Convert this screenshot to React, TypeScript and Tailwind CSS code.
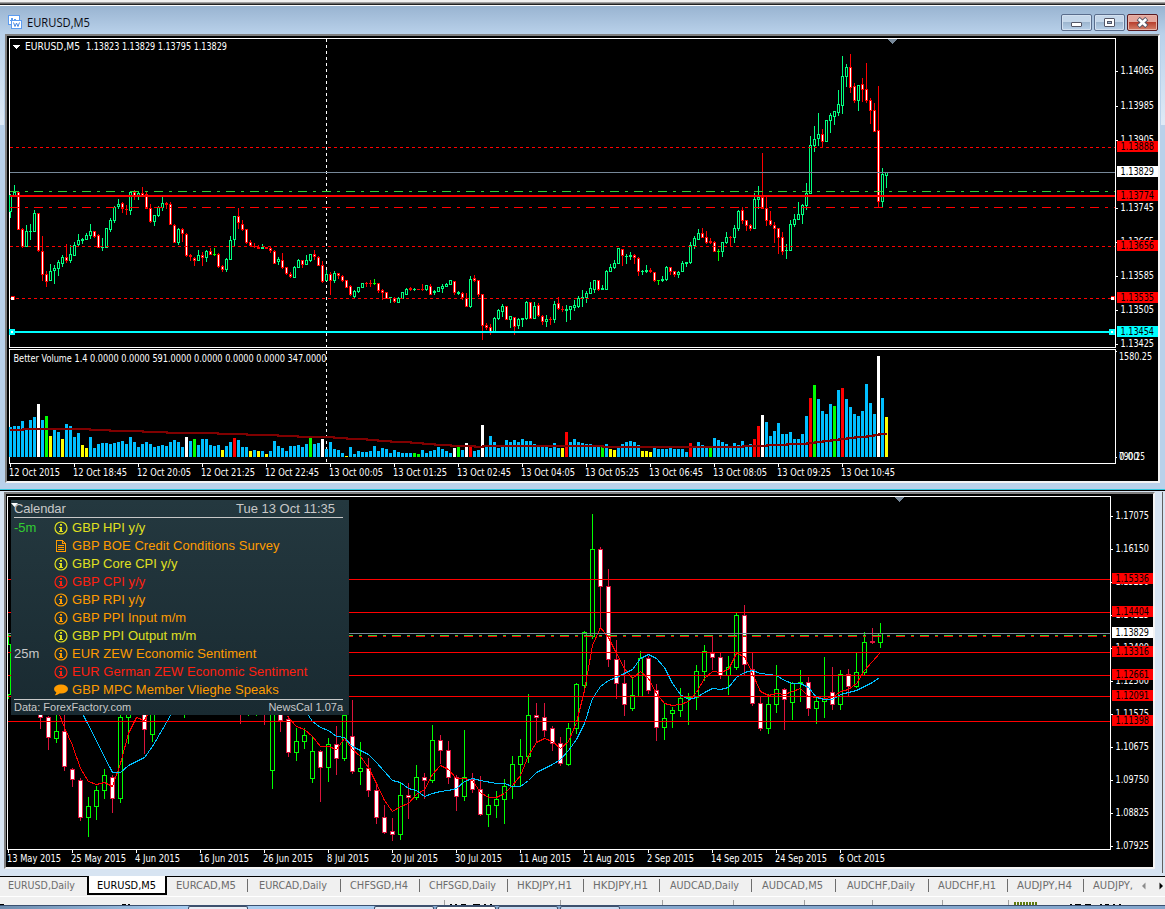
import { ReactNode } from 'react';

// dir, high, open/close top, open/close bottom, low
// u = bullish, d = bearish, l = doji
const M5_CANDLES = `
u194,195,211,218 u185,192,195,197 d192,192,229,229 d228,229,246,248 u225,231,246,246 u224,231,231,240 u210,213,231,231 d213,213,250,252 d236,251,274,281 d271,274,281,287
u264,271,280,280 u265,268,270,284 u260,262,268,276 u255,257,263,267 d244,257,260,263 u245,254,260,263 u242,245,255,255 u234,240,244,246 u238,239,240,244 u233,235,239,239
u224,231,235,239 d231,231,236,238 d234,235,247,247 u238,247,247,251 u228,228,247,247 u218,220,229,232 u206,207,220,223 u199,204,206,209 d202,203,208,213 d205,209,209,215
u191,192,210,215 d190,192,195,200 u191,193,195,200 d187,193,195,195 d192,194,208,209 d204,208,221,223 u215,215,221,226 u206,207,215,217 u197,203,207,211 d202,203,204,209
d202,204,224,224 d224,225,242,242 u228,229,242,245 d228,229,233,242 d233,234,255,257 d254,255,256,261 d257,258,260,266 u250,255,260,261 d252,255,257,266 u250,251,257,262
d248,251,254,255 l248,254,254,256 d253,254,266,268 d265,266,269,272 u258,259,269,272 u236,240,259,259 u216,216,239,246 d208,216,222,229 d220,224,229,231 d229,229,242,244
d240,242,245,246 d243,246,246,248 d245,247,248,249 u244,247,248,248 d247,247,248,248 d246,248,250,253 d250,251,263,264 u257,259,261,265 d253,260,267,269 d267,267,273,275
d272,274,276,278 u266,267,277,278 u259,260,267,268 d260,260,264,268 u255,260,264,265 u254,254,260,262 d250,254,256,260 d256,257,265,266 d261,265,281,283 u270,274,280,281
d272,274,280,295 u271,273,280,283 d273,273,275,279 d275,276,280,282 d280,280,287,288 d285,286,294,296 u290,291,296,298 u287,287,291,293 u283,283,287,288 d282,283,283,287
d280,283,283,287 l279,283,283,285 d283,283,290,293 d289,290,292,300 d292,292,298,299 u297,297,297,303 d297,298,301,303 u297,298,302,302 u292,292,298,298 u288,289,294,295
d287,288,289,291 u288,289,289,291 d289,289,289,290 d284,289,289,291 u285,285,289,291 d284,286,294,295 u290,291,292,295 u287,287,291,291 u284,286,288,293 u283,284,286,287
u280,280,284,285 d281,281,292,295 u291,292,293,295 d292,293,297,300 d293,298,306,307 u276,279,306,308 d275,278,280,282 d280,280,294,297 d294,294,325,340 d323,325,327,330
d324,327,331,335 u317,318,331,332 u309,310,318,320 u304,306,311,317 d306,306,319,320 u316,316,319,328 d317,317,326,335 u318,319,325,329 u318,318,319,327 u301,302,318,320
d302,302,318,319 u302,306,318,319 d303,305,315,317 d315,316,321,325 u315,319,321,327 d317,319,319,325 u301,304,319,323 d297,303,308,310 d306,309,309,312 u305,309,310,322
u306,306,309,320 u300,305,307,311 u296,298,306,308 u290,297,298,307 u291,293,297,303 u282,288,293,294 u280,280,289,293 d280,280,289,291 u285,288,289,290 u270,271,289,290
u264,267,271,272 u260,263,267,269 u248,248,263,263 d249,249,255,266 u254,256,256,264 u252,255,256,260 d254,255,257,264 d257,258,271,276 u270,271,271,275 u265,270,271,273
d268,270,271,273 d272,272,280,282 l280,280,280,285 u276,279,280,282 u266,267,279,281 d267,267,271,275 d271,271,274,277 u271,272,274,278 u261,263,271,272 u262,262,263,267
u242,245,262,264 u236,238,245,249 u229,233,239,240 d228,233,237,238 d231,237,242,244 d238,241,242,244 d241,242,251,252 l249,251,251,261 u242,242,251,257 u232,237,242,244
d236,237,237,247 u225,228,237,243 u210,211,228,231 d207,210,220,224 d220,220,225,231 d224,225,228,231 u193,199,228,229 u186,197,199,209 d153,197,208,209 d197,208,220,226
d211,220,224,226 d222,225,228,243 d228,228,237,254 d232,237,251,255 u244,250,250,259 u220,224,250,250 u214,219,224,227 u202,214,219,220 u204,205,214,224 u183,193,205,210
u136,145,193,194 u126,139,145,152 u113,134,138,146 d129,134,141,147 u120,120,141,142 u113,115,120,133 u111,111,116,125 u90,104,112,116 u56,76,105,114 u64,67,76,87
d54,67,87,93 d83,86,100,103 u85,85,100,111 d78,84,89,102 d63,89,100,103 d98,100,110,124 d103,110,131,132 d86,130,201,207 u168,174,201,207 u172,172,175,188`;

const DAILY_CANDLES = `
u633,644,694,699 u600,620,650,670 u600,620,650,670 u600,620,650,670 d700,705,717,729 d716,717,737,750 u705,731,738,743 d700,731,766,771 d768,769,779,787 d778,780,817,821
u797,806,817,837 u786,790,806,820 u769,775,790,799 d775,777,798,813 u705,717,798,803 u700,705,717,744 u600,620,650,670 d700,705,729,754 u700,705,734,742 u600,620,650,670
u600,620,650,670 u600,620,650,670 u600,620,650,718 u600,620,650,670 u600,620,650,670 u600,620,650,670 u600,620,650,670 u600,620,650,670 u600,620,650,670 d600,620,650,724
u600,620,650,716 u600,620,650,716 d600,620,650,725 u705,705,770,789 d700,705,720,732 d716,719,752,757 u728,741,752,761 u728,735,741,749 u737,751,778,783 d750,751,767,802
u738,744,767,782 d726,744,758,775 u715,715,758,761 d700,736,771,774 u742,768,771,785 d758,768,790,797 d784,790,817,824 d805,817,832,834 d818,831,834,841 u783,795,834,840
d783,795,797,819 u765,777,797,800 d773,777,780,799 u725,740,780,783 d735,740,750,764 d741,750,777,784 d775,777,796,811 u730,777,796,801 d773,779,789,793 d776,789,814,816
u794,805,814,827 u791,799,805,818 u779,786,799,824 u756,764,786,799 u739,756,764,786 u694,715,756,763 d703,715,717,742 d703,717,730,737 d726,728,743,751 d737,743,763,766
u723,728,764,766 u683,684,728,734 u631,632,685,689 u514,549,636,639 d547,549,586,627 d569,586,659,667 d640,659,683,699 d660,683,704,716 u677,695,708,711 u651,658,696,696
d656,658,690,694 d684,690,727,741 u703,718,727,740 u707,710,713,728 u688,698,710,717 u693,697,698,725 u665,671,697,710 u645,651,671,681 d636,653,657,670 d653,657,675,679
u656,667,675,695 u613,615,667,670 d605,615,664,675 d653,669,703,706 d697,703,728,731 u694,704,728,734 u665,689,704,713 d688,689,699,730 u682,683,702,720 u670,682,683,702
d677,682,708,716 u697,701,708,724 u657,699,701,718 d667,692,704,710 u670,674,704,710 d669,674,686,696 u653,672,686,688 u632,642,672,675 d628,641,642,644 u623,633,642,648`;

// bar height, suffix is the colour when it is not a normal bar
const VOLUMES = `
30 31 31 36 28 37 40 53w 37 41g 21y 27 25 18y 33 31 20 24 12y 9y 20 9 13 14 14 13 14 15 16 13 20 15 10 13 15 13 10 11 12 11
15 17 15 10 20w 16 18g 12 18 18 12 11 12 7y 11 15 19r 17 10 10 6y 7 6y 6 3y 6 16 11 9 6 11 11 12 10 13 19g 13 14 18w 8
15 8 7 4 1y 10 3 6 5 5 6 11 6 9 8 4 7 5 4 4 4 4g 3g 7 4 6 7 10 8 6 4 9w 10g 7 14w 11r 6 7 32w 11
21 15 9 11 17 15 17 15 18 16 16 13 11 11 10 9 14 9 9y 25r 15 18 15 14 13 13 11 11 10g 13 8y 7y 10 13 15 16 15 12 6y 6y
5y 9 8 8 8 9 8 8 8 5 14r 10 15 12 10 10g 19 17 15 13 11 14 12 16 10 13 18r 31r 42w 35 21 26 34 23 23 25 18 18 23 41
59r 72g 58 46 43 53 51g 67 69r 58 50 43 41 46 73 54 43 101w 59 40y`;

const VOLUME_COLORS: Record<string, string> = {
  w: '#ffffff',
  g: '#00ff00',
  y: '#ffff00',
  r: '#ff0000',
};

const VOLUME_MA =
  'M10 430H23V429H90V430H110V431H143V432H167V433H218V434H247V435H278V436H298V437H334V438H347V439H367V440H378V441H391V442H411V443H423V444H435V445H451V446H475V447H483V446H603V447H743V446H767V445H787V444H807V443H815V442H823V441H831V440H839V439H847V438H855V437H867V436H874V435H879V434H887';

const FAST_MA = [
  '59,714 64,727 72,745 80,768 88,781 96,784 104,782 112,786 120,763 128,733 136,717 144,720 148,712',
  '287,716 296,726 304,729 312,736 320,746 328,746 336,749 344,738 352,749 360,756 368,767 376,783 384,800 392,811 400,806 408,803 416,794 424,789 432,774 440,765 448,769 456,778 464,778 472,780 480,792 488,797 496,797 504,793 512,785 520,775 528,755 536,742 544,738 552,741 560,748 568,741 576,722 584,690 592,645 600,627 608,637 616,653 624,668 632,678 640,671 648,678 656,693 664,703 672,705 680,704 688,701 696,692 704,678 712,671 720,672 728,669 736,653 744,656 752,673 760,691 768,695 776,693 784,694 792,691 800,688 808,696 816,697 824,698 832,697 840,691 848,689 856,683 864,670 872,661 879,653',
];

const SLOW_MA = [
  '83,715 112,772 120,772 128,765 144,757 152,746 170,715',
  '308,715 312,721 320,727 328,730 336,736 344,737 352,746 360,750 368,754 376,762 384,771 392,780 400,782 408,788 416,790 424,796 432,793 440,791 448,790 456,788 464,781 472,778 480,780 496,783 504,783 512,786 520,786 528,780 536,772 552,764 560,759 568,750 576,739 584,723 592,698 600,686 608,680 616,677 624,673 632,669 640,658 648,654 656,658 664,667 672,683 680,694 688,699 696,697 704,692 712,688 720,689 728,687 736,677 744,672 752,670 760,673 768,674 776,675 784,680 792,683 800,683 808,687 816,697 824,699 832,699 840,694 848,692 856,690 864,686 872,682 879,677',
];

const M5_TIMES = [
  '12 Oct 2015', '12 Oct 18:45', '12 Oct 20:05', '12 Oct 21:25', '12 Oct 22:45', '13 Oct 00:05', '13 Oct 01:25',
  '13 Oct 02:45', '13 Oct 04:05', '13 Oct 05:25', '13 Oct 06:45', '13 Oct 08:05', '13 Oct 09:25', '13 Oct 10:45',
];

const DAILY_TIMES: [string, number][] = [
  ['13 May 2015', 54], ['25 May 2015', 55], ['4 Jun 2015', 45], ['16 Jun 2015', 50], ['26 Jun 2015', 50],
  ['8 Jul 2015', 42], ['20 Jul 2015', 47], ['30 Jul 2015', 47], ['11 Aug 2015', 52], ['21 Aug 2015', 52],
  ['2 Sep 2015', 47], ['14 Sep 2015', 52], ['24 Sep 2015', 52], ['6 Oct 2015', 46],
];

const M5_PRICES: [string, number][] = [
  ['1.14065', 71], ['1.13985', 106], ['1.13905', 140], ['1.13745', 208], ['1.13665', 242],
  ['1.13585', 276], ['1.13505', 310], ['1.13425', 344],
];

const DAILY_PRICES: [string, number][] = [
  ['1.17075', 516], ['1.16150', 549], ['1.15250', 582], ['1.14325', 615], ['1.13400', 648], ['1.12500', 681],
  ['1.11575', 714], ['1.10675', 747], ['1.09750', 780], ['1.08825', 813], ['1.07925', 846],
];

const M5_TAGS: [string, number, string][] = [
  ['1.13888', 141, '#ff0000'],
  ['1.13829', 166, '#ffffff'],
  ['1.13774', 190, '#ff0000'],
  ['1.13656', 240, '#ff0000'],
  ['1.13535', 292, '#ff0000'],
  ['1.13454', 326, '#00ffff'],
];

const DAILY_TAGS: [string, number, string][] = [
  ['1.15336', 573, '#ff0000'],
  ['1.14404', 606, '#ff0000'],
  ['1.13829', 627, '#ffffff'],
  ['1.13316', 646, '#ff0000'],
  ['1.12661', 669, '#ff0000'],
  ['1.12091', 690, '#ff0000'],
  ['1.11398', 715, '#ff0000'],
];

const TABS = [
  { label: 'EURCAD,M5', w: 'w-[81px]', text: 60 },
  { label: 'EURCAD,Daily', w: 'w-[93px]', text: 68 },
  { label: 'CHFSGD,H4', w: 'w-[79px]', text: 58 },
  { label: 'CHFSGD,Daily', w: 'w-[88px]', text: 67 },
  { label: 'HKDJPY,H1', w: 'w-[76px]', text: 55 },
  { label: 'HKDJPY,H1', w: 'w-[76px]', text: 55 },
  { label: 'AUDCAD,Daily', w: 'w-[92px]', text: 69 },
  { label: 'AUDCAD,M5', w: 'w-[84px]', text: 61 },
  { label: 'AUDCHF,Daily', w: 'w-[93px]', text: 68 },
  { label: 'AUDCHF,H1', w: 'w-[79px]', text: 58 },
  { label: 'AUDJPY,H4', w: 'w-[76px]', text: 55 },
];

const EVENTS = [
  { time: '-5m', icon: 'info', text: 'GBP HPI y/y', color: 'text-[#e0e020]' },
  { time: '', icon: 'doc', text: 'GBP BOE Credit Conditions Survey', color: 'text-[#ff9c00]' },
  { time: '', icon: 'info', text: 'GBP Core CPI y/y', color: 'text-[#e0e020]' },
  { time: '', icon: 'info', text: 'GBP CPI y/y', color: 'text-[#ff2010]' },
  { time: '', icon: 'info', text: 'GBP RPI y/y', color: 'text-[#ff9c00]' },
  { time: '', icon: 'info', text: 'GBP PPI Input m/m', color: 'text-[#ff9c00]' },
  { time: '', icon: 'info', text: 'GBP PPI Output m/m', color: 'text-[#e0e020]' },
  { time: '25m', icon: 'info', text: 'EUR ZEW Economic Sentiment', color: 'text-[#ff9c00]' },
  { time: '', icon: 'info', text: 'EUR German ZEW Economic Sentiment', color: 'text-[#ff2010]' },
  { time: '', icon: 'speech', text: 'GBP MPC Member Vlieghe Speaks', color: 'text-[#ff9c00]' },
];

const DASH_DOT = '9 6 3 6';

const Candles = ({ data, x0, step, half, up, down }: { data: string; x0: number; step: number; half: number; up: string; down: string }) => (
  <g>
    {data.trim().split(/\s+/).map((item, i) => {
      const dir = item[0];
      const [high, top, bottom, low] = item.slice(1).split(',').map(Number);
      const x = x0 + i * step;
      const color = dir === 'u' ? up : dir === 'd' ? down : '#00ff00';
      return (
        <g key={i}>
          <rect x={x} y={high} width={1} height={Math.max(low - high, 1)} fill={color} />
          <rect x={x - half} y={top} width={half * 2 + 1} height={bottom - top + 1} fill={color} />
          {bottom - top > 1 && (
            <rect x={x - half + 1} y={top + 1} width={half * 2 - 1} height={bottom - top - 1} fill={dir === 'u' ? '#000' : '#fff'} />
          )}
        </g>
      );
    })}
  </g>
);

const Label = ({ x, y, w, fill = '#fff', children }: { x: number; y: number; w: number; fill?: string; children: ReactNode }) => (
  <text x={x} y={y} textLength={w} lengthAdjust="spacingAndGlyphs" fill={fill} fontSize="10">
    {children}
  </text>
);

const HLine = ({ x1, x2, y, color, dash, width = 1 }: { x1: number; x2: number; y: number; color: string; dash?: string; width?: number }) => (
  <line x1={x1} x2={x2} y1={y + width / 2} y2={y + width / 2} stroke={color} strokeWidth={width} strokeDasharray={dash} />
);

const PriceScale = ({ x, prices, tags }: { x: number; prices: [string, number][]; tags: [string, number, string][] }) => (
  <g>
    {prices.map(([text, y]) => (
      <g key={text}>
        <rect x={x} y={y} width={3} height={1} fill="#fff" />
        <Label x={x + 5.5} y={y + 3} w={33.5}>{text}</Label>
      </g>
    ))}
    {tags.map(([text, y, color]) => (
      <g key={text}>
        <rect x={x + 2} y={y} width={41} height={11} fill={color} />
        <Label x={x + 5.5} y={y + 9} w={33.5} fill="#000">{text}</Label>
      </g>
    ))}
  </g>
);

const M5Chart = () => (
  <svg width="1151" height="445" viewBox="7 36 1151 445" shapeRendering="crispEdges" className="block shrink-0 bg-black font-['DejaVu_Sans_Condensed','DejaVu_Sans',sans-serif]">
    <rect x="9.5" y="38.5" width="1106" height="309" fill="none" stroke="#fff" />
    <rect x="9.5" y="349.5" width="1106" height="114" fill="none" stroke="#fff" />
    <line x1="326.5" x2="326.5" y1="39" y2="462" stroke="#fff" strokeDasharray="3 3" />

    <Candles data={M5_CANDLES} x0={10} step={4} half={1} up="#00ff7f" down="#ff0000" />

    {/* Levels */}
    <HLine x1={10} x2={1115} y={147} color="#ff0000" dash="3 3" />
    <HLine x1={10} x2={1115} y={172} color="#778899" />
    <HLine x1={10} x2={1115} y={191} color="#32cd32" dash={DASH_DOT} />
    <HLine x1={10} x2={1115} y={195} color="#ff0000" width={2} />
    <HLine x1={10} x2={1115} y={207} color="#ff0000" dash={DASH_DOT} />
    <HLine x1={10} x2={1115} y={246} color="#ff0000" dash="3 3" />
    <HLine x1={10} x2={1115} y={298} color="#ff0000" dash="3 3" />
    <HLine x1={10} x2={1115} y={331} color="#00ffff" width={2} />
    <rect x="11" y="296" width="4" height="4" fill="#ff0000" />
    <rect x="11" y="297" width="3" height="3" fill="#fff" />
    <rect x="1111" y="296" width="4" height="4" fill="#ff0000" />
    <rect x="1111" y="297" width="3" height="3" fill="#fff" />
    <rect x="9" y="329" width="6" height="6" fill="#00ffff" />
    <rect x="11" y="331" width="2" height="2" fill="#fff" />
    <rect x="1109" y="329" width="6" height="6" fill="#00ffff" />
    <rect x="1111" y="331" width="2" height="2" fill="#fff" />

    <path d="M13 45h7l-3.5 4z" fill="#fff" />
    <path d="M888 39h9l-4.5 5z" fill="#778899" />
    <Label x={25} y={50} w={55}>EURUSD,M5</Label>
    <Label x={86} y={50} w={141}>1.13823 1.13829 1.13795 1.13829</Label>
    <PriceScale x={1115} prices={M5_PRICES} tags={M5_TAGS} />

    {/* Volume */}
    {VOLUMES.trim().split(/\s+/).map((v, i) => {
      const h = parseInt(v, 10);
      return <rect key={i} x={9 + i * 4} y={457 - h} width={3} height={h} fill={VOLUME_COLORS[v.slice(-1)] ?? '#00bfff'} />;
    })}
    <path d={VOLUME_MA} fill="none" stroke="#800000" strokeWidth="2" />
    <Label x={13.5} y={362} w={313}>Better Volume 1.4 0.0000 0.0000 591.0000 0.0000 0.0000 0.0000 347.0000</Label>
    <rect x="1115" y="351" width="2" height="1" fill="#fff" />
    <rect x="1115" y="457" width="2" height="1" fill="#fff" />
    <Label x={1119} y={360} w={33}>1580.25</Label>
    <Label x={1119} y={460} w={20}>0.00</Label>
    <Label x={1119} y={460} w={26}>790.25</Label>

    {M5_TIMES.map((t, i) => (
      <g key={t}>
        <rect x={10 + i * 64} y={463} width={1} height={4} fill="#fff" />
        <Label x={9 + i * 64} y={476} w={i === 0 ? 51 : 54}>{t}</Label>
      </g>
    ))}
  </svg>
);

const DailyChart = () => (
  <svg width="1147" height="373" viewBox="6 494 1147 373" shapeRendering="crispEdges" className="block bg-black font-['DejaVu_Sans_Condensed','DejaVu_Sans',sans-serif]">
    <clipPath id="daily-plot">
      <rect x="8" y="497" width="1102" height="352" />
    </clipPath>
    <g clipPath="url(#daily-plot)">
      <Candles data={DAILY_CANDLES} x0={8} step={8} half={2} up="#00ff00" down="#dc143c" />
      {FAST_MA.map((p) => (
        <polyline key={p} points={p} fill="none" stroke="#ff0000" transform="translate(.5 .5)" />
      ))}
      {SLOW_MA.map((p) => (
        <polyline key={p} points={p} fill="none" stroke="#00bfff" transform="translate(.5 .5)" />
      ))}
    </g>
    <rect x="7.5" y="496.5" width="1103" height="353" fill="none" stroke="#fff" />

    {[579, 612, 652, 675, 696, 721].map((y) => (
      <HLine key={y} x1={8} x2={1110} y={y} color="#ff0000" />
    ))}
    <HLine x1={8} x2={1110} y={633} color="#778899" />
    <HLine x1={8} x2={1110} y={635} color="#ff0000" dash={DASH_DOT} width={2} />
    <HLine x1={8} x2={1110} y={635} color="#32cd32" dash={DASH_DOT} />

    <path d="M895 497h9l-4.5 5z" fill="#778899" />
    <PriceScale x={1110} prices={DAILY_PRICES} tags={DAILY_TAGS} />
    {DAILY_TIMES.map(([t, w], i) => (
      <g key={t}>
        <rect x={8 + i * 64} y={849} width={1} height={4} fill="#fff" />
        <Label x={7 + i * 64} y={862} w={w}>{t}</Label>
      </g>
    ))}
  </svg>
);

const EventIcon = ({ type }: { type: string }) => {
  if (type === 'doc') {
    return (
      <svg width="14" height="14" viewBox="0 0 14 14" fill="none" stroke="currentColor" shapeRendering="crispEdges">
        <path d="M2.5 1.5h6l3 3v8h-9zM8.5 1.5v3h3M4 6.5h6M4 8.5h6M4 10.5h6" />
      </svg>
    );
  }
  if (type === 'speech') {
    return (
      <svg width="14" height="14" viewBox="0 0 14 14" fill="currentColor">
        <ellipse cx="7" cy="6" rx="7" ry="4.5" />
        <path d="M2.5 8.5C2.4 10 1.8 11 .8 12.2c2.5-.2 4-1 5.2-2.5z" />
      </svg>
    );
  }
  return (
    <svg width="14" height="14" viewBox="0 0 14 14" fill="none" stroke="currentColor">
      <circle cx="7" cy="7" r="6" strokeWidth="1.2" />
      <path d="M7 3v1.8M7 6v5" strokeWidth="2" />
      <path d="M5 6.5h2M5 10.5h4" />
    </svg>
  );
};

const Calendar = () => (
  <div className="absolute left-[5px] top-[6px] flex h-[215px] w-[338px] flex-col bg-linear-to-b from-[#24383f] to-[#192a31] pl-[3px] pr-[6px] font-['Liberation_Sans',Arial,sans-serif] text-[13px] text-[#c8c8c8]">
    <svg width="7" height="4" viewBox="0 0 7 4" className="absolute left-0 top-[3px]">
      <path d="M0 0h7l-3.5 4z" fill="#fff" />
    </svg>
    <div className="flex h-[18px] items-center justify-between border-b border-[#c8c8c8] pr-2 leading-[18px]">
      <span className="-tracking-[0.15px] pt-px">Calendar</span>
      <span className="pt-px">Tue 13 Oct 11:35</span>
    </div>
    <div className="flex flex-col pt-px">
      {EVENTS.map((e) => (
        <div key={e.text} className="flex h-[18px] items-center leading-[18px]">
          <span className={e.time === '-5m' ? 'w-[40px] text-[#32cd32]' : 'w-[40px]'}>{e.time}</span>
          <span className={`flex items-center gap-1 whitespace-nowrap tracking-[0.06px] ${e.color}`}>
            <EventIcon type={e.icon} />
            {e.text}
          </span>
        </div>
      ))}
    </div>
    <div className="flex h-[16px] items-center justify-between border-t border-[#c8c8c8] text-[11px] leading-[15px]">
      <span>Data: ForexFactory.com</span>
      <span>NewsCal 1.07a</span>
    </div>
  </div>
);

const TabText = ({ children, w, fill = '#6d6d6d' }: { children: string; w: number; fill?: string }) => (
  <svg width={w + 2} height="15" className="-mt-px shrink-0 overflow-visible">
    <text x="0" y="11" textLength={w} lengthAdjust="spacingAndGlyphs" fontSize="11" fill={fill}>
      {children}
    </text>
  </svg>
);

const TitleBar = () => (
  <div className="flex h-[28px] shrink-0 items-start justify-between bg-linear-to-b from-[#99b4d1] to-[#b9d1ea] pl-2 pr-[7px] pt-2">
    <div className="flex items-start gap-[5px]">
      <svg width="14" height="15" viewBox="0 0 14 15" shapeRendering="crispEdges" className="mt-px">
        <rect x=".5" y=".5" width="11" height="9" fill="#fff" stroke="#5b9bf0" />
        <path d="M2 5h1v-2h1v4h2v-3h1v2h2" fill="none" stroke="#5b9bf0" />
        <rect x="3.5" y="5.5" width="10" height="8" fill="#fff" stroke="#5b9bf0" />
        <path d="M5.5 7.5l1.5 4 1.5-3.500 1.5 3.500 1.5-4" fill="none" stroke="#4384e0" shapeRendering="auto" />
      </svg>
      <svg width="70" height="20" className="overflow-visible font-['Open_Sans','Noto_Sans',sans-serif]">
        <text x="0" y="13" textLength="63" lengthAdjust="spacingAndGlyphs" fontSize="12.5" fill="#0a0a14">
          EURUSD,M5
        </text>
      </svg>
    </div>
    <div className="flex gap-[2px]">
      <div className="flex h-[17px] w-[31px] items-end justify-center rounded-[2px] border border-[#5a6d8c] bg-linear-to-b from-[#c5d7ea] from-45% via-[#9db6cf] via-50% to-[#b9d1ea] pb-[3px] shadow-[inset_0_0_0_1px_#d3e1f0]">
        <div className="h-[5px] w-[11px] rounded-[1px] border border-[#535666] bg-white" />
      </div>
      <div className="flex h-[17px] w-[31px] items-center justify-center rounded-[2px] border border-[#5a6d8c] bg-linear-to-b from-[#c5d7ea] from-45% via-[#9db6cf] via-50% to-[#b9d1ea] shadow-[inset_0_0_0_1px_#d3e1f0]">
        <div className="flex h-[9px] w-[11px] items-center justify-center rounded-[1px] border border-[#535666] bg-white">
          <div className="h-[3px] w-[5px] border border-[#535666] bg-[#9db6cf]" />
        </div>
      </div>
      <div className="flex h-[17px] w-[31px] items-center justify-center rounded-[2px] border border-[#5a1a20] bg-linear-to-b from-[#e3a69c] from-45% via-[#b8402f] via-50% to-[#d4806a] shadow-[inset_0_0_0_1px_#e8b4a8]">
        <svg width="13" height="11" viewBox="0 0 13 11">
          <path d="M2.2 1.5l8.600 8M10.800 1.500l-8.600 8" stroke="#535666" strokeWidth="4.5" />
          <path d="M2.800 2l7.400 7M10.200 2l-7.400 7" stroke="#fff" strokeWidth="2.6" />
        </svg>
      </div>
    </div>
  </div>
);

const App = () => {
  return (
    <div className="flex h-[909px] w-[1165px] flex-col overflow-hidden bg-[#f0f0f0] font-['DejaVu_Sans_Condensed','DejaVu_Sans',sans-serif]">
      {/* Toolbar edge */}
      <div className="h-[2px] shrink-0 bg-[#f0f0f0]" />
      <div className="h-px shrink-0 bg-[#a0a0a0]" />
      <div className="h-px shrink-0 bg-[#696969]" />
      <div className="h-px shrink-0 bg-[#202020]" />
      <div className="h-px shrink-0 bg-white" />

      {/* M5 window */}
      <div className="flex h-[483px] shrink-0 flex-col bg-[#b9d1ea]">
        <TitleBar />
        <div className="flex">
          <div className="h-[91px] w-[4px] bg-linear-to-b from-[#b9d1ea] to-[#dfeaf6]" />
          <div className="ml-px border-2 border-b-[#f4f4f4] border-l-[#808080] border-r-[#f4f4f4] border-t-[#808080]">
            <M5Chart />
          </div>
          <div className="ml-px h-[91px] w-[4px] bg-linear-to-b from-[#b9d1ea] to-[#dfeaf6]" />
        </div>
      </div>
      <div className="h-px shrink-0 bg-[#34c6dc]" />
      <div className="h-px shrink-0 bg-black" />

      {/* Daily window */}
      <div className="flex h-[385px] shrink-0 bg-[#d7e4f2] pl-1 pt-px">
        <div className="relative h-[377px] border-2 border-b-[#f4f4f4] border-l-[#808080] border-r-[#f4f4f4] border-t-[#808080]">
          <DailyChart />
          <Calendar />
        </div>
        <div className="ml-[7px] h-[381px] w-px bg-[#606060]" />
      </div>

      {/* Chart tabs */}
      <div className="flex h-[20px] shrink-0 border-t border-black">
        <div className="flex w-[87px] pl-2 pt-[2px]">
          <TabText w={67}>EURUSD,Daily</TabText>
        </div>
        <div className="-mt-px flex h-[19px] w-[80px] justify-center border-x-2 border-b-2 border-black bg-white pt-[3px]">
          <TabText w={59} fill="#000">EURUSD,M5</TabText>
        </div>
        {TABS.map((tab, i) => (
          <div key={i} className={`flex shrink-0 items-start pt-[2px] ${tab.w}`}>
            <div className="flex flex-1 justify-center pr-px">
              <TabText w={tab.text}>{tab.label}</TabText>
            </div>
            <div className="h-[13px] w-px bg-[#6d6d6d]" />
          </div>
        ))}
        <div className="flex flex-1 items-start pl-[9px] pt-[2px]">
          <TabText w={40}>AUDJPY,</TabText>
          <svg width="24" height="13" viewBox="0 0 24 13" className="ml-[6px]">
            <path d="M4.5 3.500v7l-3.500-3.500z" fill="#8c8c8c" />
            <path d="M18.500 3.500v7l3.500-3.500z" fill="#000" />
          </svg>
        </div>
      </div>

      {/* Status bar and taskbar */}
      <div className="flex h-[9px] shrink-0 items-end border-t border-white bg-[#f0f0f0]">
        <svg width="1165" height="8" viewBox="0 897 1165 8" shapeRendering="crispEdges">
          {[444, 560, 662, 733, 804, 872, 942, 1008].map((x) => (
            <rect key={x} x={x} y="900" width="1" height="5" fill="#a0a0a0" />
          ))}
          {[0, 1, 2, 3, 4, 5, 6, 7].map((i) => (
            <rect key={i} x={1014 + i * 3} y="902" width="2" height="3" fill="#5f7a10" />
          ))}
          <path d="M0 904.5h4M122 904.5h4M128 904.5h2M450 904.5h2M455 904.5h2M461 904.5h5M473 904.5h7M484 904.5h2M490 904.5h2M1070 904.5h2M1075 904.5h6M1085 904.5h6M1100 904.5h2M1105 904.5h4M1113 904.5h2M1119 904.5h2" stroke="#000" />
        </svg>
      </div>
      <div className="flex h-[4px] shrink-0 border-t border-[#3b5070] bg-[#84a6cc]">
        <div className="w-[188px] bg-linear-to-r from-[#6d8cae] to-[#a9cdf0]" />
        <div className="h-[6px] w-[60px] shrink-0 rounded-t-[2px] border border-[#40506a] bg-[#e6edf6]" />
        <div className="w-[126px] bg-[#a9cdf0]" />
        <div className="h-[6px] w-[60px] shrink-0 rounded-t-[2px] border border-[#40506a] bg-[#e6edf6]" />
        <div className="ml-[2px] h-[6px] w-[60px] shrink-0 rounded-t-[2px] border border-[#40506a] bg-white" />
        <div className="ml-[2px] h-[6px] w-[60px] shrink-0 rounded-t-[2px] border border-[#40506a] bg-[#c9dcf2]" />
        <div className="ml-[2px] h-[6px] w-[60px] shrink-0 rounded-t-[2px] border border-[#40506a] bg-[#c9dcf2]" />
      </div>
    </div>
  );
};

export default App;
